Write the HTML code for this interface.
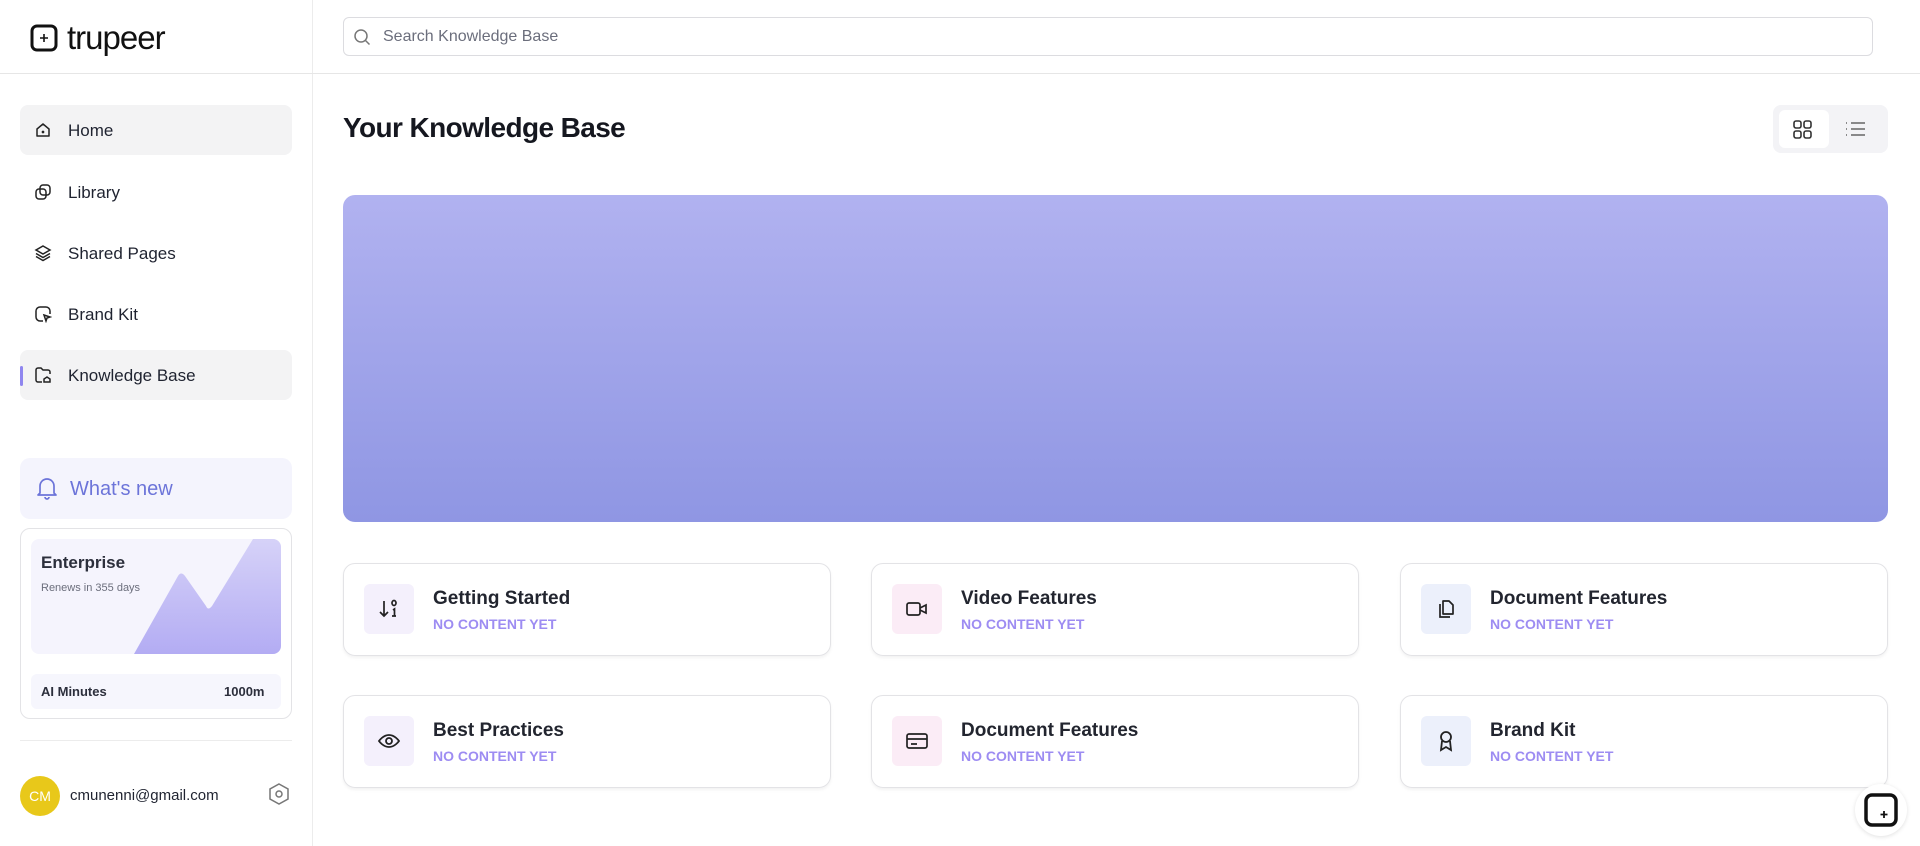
<!DOCTYPE html>
<html><head><meta charset="utf-8"><style>
*{box-sizing:border-box;margin:0;padding:0}
body{width:1920px;height:846px;overflow:hidden;background:#fff;font-family:"Liberation Sans",sans-serif;color:#1f2330;position:relative}
.abs{position:absolute}
.sb{left:0;top:0;width:313px;height:846px;border-right:1px solid #ececec}
.nav{position:absolute;left:20px;width:272px;height:50px;border-radius:8px;display:flex;align-items:center;font-size:17px;color:#1f2330}
.nav svg{position:absolute;left:14px}
.nav span{position:absolute;left:48px;top:16px}
.card{position:absolute;width:488px;height:93px;border:1px solid #e3e3e6;border-radius:12px;box-shadow:0 2px 3px rgba(0,0,0,.05)}
.ib{position:absolute;left:20px;top:20px;width:50px;height:50px;border-radius:6px;display:flex;align-items:center;justify-content:center}
.ct{position:absolute;left:89px;top:24px;font-size:19px;font-weight:bold;color:#22252f}
.cs{position:absolute;left:89px;top:52px;font-size:14px;font-weight:bold;color:#9d8cf2}
</style></head><body>
<div class="abs sb"></div>
<div class="abs" style="left:0;top:73px;width:1920px;height:1px;background:#e6e6e6"></div>
<svg class="abs" style="left:30px;top:24px" width="28" height="28" viewBox="0 0 28 28"><rect x="2" y="2" width="24" height="24" rx="5" fill="none" stroke="#111" stroke-width="3"/><path d="M14 10v8M10 14h8" stroke="#111" stroke-width="1.6"/></svg>
<div class="abs" style="left:67px;top:21px;font-size:33px;line-height:33px;font-weight:500;color:#111;letter-spacing:-1px">trupeer</div>

<div class="nav" style="top:105px;background:#f3f3f4"><svg width="18" height="18" viewBox="0 0 18 18" fill="none" stroke="#222" stroke-width="1.5"><path d="M3 8l6-5 6 5v7H3z" stroke-linejoin="round"/><circle cx="9" cy="11" r=".6" fill="#222"/></svg><span>Home</span></div>
<div class="nav" style="top:167px"><svg width="18" height="18" viewBox="0 0 18 18" fill="none" stroke="#222" stroke-width="1.5"><rect x="6" y="2" width="10" height="10" rx="3"/><rect x="2" y="6" width="10" height="10" rx="3"/></svg><span>Library</span></div>
<div class="nav" style="top:228px"><svg width="18" height="18" viewBox="0 0 18 18" fill="none" stroke="#222" stroke-width="1.5"><path d="M9 2l7 4-7 4-7-4z"/><path d="M2 9.5l7 4 7-4M2 12.5l7 4 7-4"/></svg><span>Shared Pages</span></div>
<div class="nav" style="top:289px"><svg width="18" height="18" viewBox="0 0 18 18" fill="none" stroke="#222" stroke-width="1.5"><path d="M9 16H6a4 4 0 0 1-4-4V6a4 4 0 0 1 4-4h6a4 4 0 0 1 4 4v3"/><path d="M10 10l6 2-3 1-1 3z"/></svg><span>Brand Kit</span></div>
<div class="nav" style="top:350px;background:#f3f3f4"><svg width="18" height="18" viewBox="0 0 18 18" fill="none" stroke="#222" stroke-width="1.5"><path d="M8 16H4a2 2 0 0 1-2-2V4a2 2 0 0 1 2-2h3l2 2h5a2 2 0 0 1 2 2v2"/><path d="M10 16h6v-3l-3-2-3 2z"/></svg><span>Knowledge Base</span></div>
<div class="abs" style="left:20px;top:366px;width:3px;height:20px;background:#8f86ef;border-radius:2px"></div>

<div class="abs" style="left:20px;top:458px;width:272px;height:61px;background:#f4f4fd;border-radius:10px"></div>
<svg class="abs" style="left:36px;top:476px" width="22" height="24" viewBox="0 0 22 24" fill="none" stroke="#6c74d9" stroke-width="1.7"><path d="M4 17V10a7 7 0 0 1 14 0v7l2 2H2z" stroke-linejoin="round"/><path d="M9 21a2 2 0 0 0 4 0"/></svg>
<div class="abs" style="left:70px;top:478px;font-size:20px;color:#6c74d9">What's new</div>

<div class="abs" style="left:20px;top:528px;width:272px;height:191px;border:1px solid #e3e3e6;border-radius:10px"></div>
<div class="abs" style="left:31px;top:539px;width:250px;height:115px;background:#f5f4fd;border-radius:8px;overflow:hidden">
<svg width="250" height="115" style="position:absolute;left:0;top:0"><defs><linearGradient id="g" x1="0" y1="0" x2="0" y2="1"><stop offset="0" stop-color="#d6d2f8"/><stop offset="1" stop-color="#b3acf3"/></linearGradient></defs><path d="M103 115L147 37Q150 32 154 37L175 67Q177 72 181 67L222 0H250V115Z" fill="url(#g)"/></svg>
</div>
<div class="abs" style="left:41px;top:553px;font-size:17px;font-weight:bold;color:#2c2f3c">Enterprise</div>
<div class="abs" style="left:41px;top:582px;font-size:11px;color:#6b6e7c">Renews in 355 days</div>
<div class="abs" style="left:31px;top:674px;width:250px;height:35px;background:#f6f6fd;border-radius:6px"></div>
<div class="abs" style="left:41px;top:684px;font-size:13px;font-weight:bold;color:#2c2f3c">AI Minutes</div>
<div class="abs" style="left:224px;top:684px;font-size:13px;font-weight:bold;color:#2c2f3c">1000m</div>
<div class="abs" style="left:20px;top:740px;width:272px;height:1px;background:#ececec"></div>
<div class="abs" style="left:20px;top:776px;width:40px;height:40px;border-radius:50%;background:#e8c81a;color:#fff;font-size:14px;display:flex;align-items:center;justify-content:center">CM</div>
<div class="abs" style="left:70px;top:787px;font-size:15px;color:#1f2330">cmunenni@gmail.com</div>
<svg class="abs" style="left:267px;top:782px" width="24" height="24" viewBox="0 0 24 24" fill="none" stroke="#777" stroke-width="1.5"><path d="M12 2l9 5v10l-9 5-9-5V7z"/><circle cx="12" cy="12" r="3"/></svg>

<div class="abs" style="left:343px;top:17px;width:1530px;height:39px;border:1px solid #dcdce0;border-radius:6px"></div>
<svg class="abs" style="left:353px;top:28px" width="18" height="18" viewBox="0 0 18 18" fill="none" stroke="#777" stroke-width="1.5"><circle cx="8" cy="8" r="6"/><path d="M12.5 12.5l4 4"/></svg>
<div class="abs" style="left:383px;top:28px;font-size:16px;color:#6b6e7c">Search Knowledge Base</div>

<div class="abs" style="left:343px;top:112px;font-size:28px;font-weight:bold;color:#15171f;letter-spacing:-.6px">Your Knowledge Base</div>
<div class="abs" style="left:1773px;top:105px;width:115px;height:48px;background:#f3f3f6;border-radius:8px"></div>
<div class="abs" style="left:1779px;top:110px;width:50px;height:38px;background:#fff;border-radius:6px"></div>
<svg class="abs" style="left:1793px;top:120px" width="19" height="19" viewBox="0 0 19 19" fill="none" stroke="#333" stroke-width="1.6"><rect x="1" y="1" width="7" height="7" rx="2"/><rect x="11" y="1" width="7" height="7" rx="2"/><rect x="1" y="11" width="7" height="7" rx="2"/><rect x="11" y="11" width="7" height="7" rx="2"/></svg>
<svg class="abs" style="left:1845px;top:121px" width="21" height="16" viewBox="0 0 21 16" fill="none" stroke="#666" stroke-width="1.5"><path d="M1 2h1M1 8h1M1 14h1M6 2h14M6 8h14M6 14h14"/></svg>

<div class="abs" style="left:343px;top:195px;width:1545px;height:327px;border-radius:12px;background:linear-gradient(#b1b2f0,#8f96e3)"></div>

<div class="card" style="left:343px;top:563px"><div class="ib" style="background:#f4f0fc"><svg width="22" height="22" viewBox="0 0 22 22" fill="none" stroke="#222" stroke-width="1.7"><path d="M6 3v15M2 14l4 4 4-4"/><ellipse cx="16" cy="5" rx="2" ry="2.5"/><path d="M15 12l1.5-1v7M14 18h4"/></svg></div><div class="ct">Getting Started</div><div class="cs">NO CONTENT YET</div></div>
<div class="card" style="left:871px;top:563px"><div class="ib" style="background:#fbecf6"><svg width="24" height="20" viewBox="0 0 24 20" fill="none" stroke="#222" stroke-width="1.7"><rect x="2" y="4" width="13" height="12" rx="2"/><path d="M15 9l6-3v8l-6-3"/></svg></div><div class="ct">Video Features</div><div class="cs">NO CONTENT YET</div></div>
<div class="card" style="left:1400px;top:563px"><div class="ib" style="background:#ecf0fb"><svg width="22" height="22" viewBox="0 0 22 22" fill="none" stroke="#222" stroke-width="1.7"><path d="M8 3h6l4 4v9H8z" stroke-linejoin="round"/><path d="M5 6v13h10"/></svg></div><div class="ct">Document Features</div><div class="cs">NO CONTENT YET</div></div>

<div class="card" style="left:343px;top:695px"><div class="ib" style="background:#f4f0fc"><svg width="24" height="20" viewBox="0 0 24 20" fill="none" stroke="#222" stroke-width="1.8"><path d="M2 10s4-6 10-6 10 6 10 6-4 6-10 6-10-6-10-6z"/><circle cx="12" cy="10" r="3"/></svg></div><div class="ct">Best Practices</div><div class="cs">NO CONTENT YET</div></div>
<div class="card" style="left:871px;top:695px"><div class="ib" style="background:#fbecf6"><svg width="24" height="20" viewBox="0 0 24 20" fill="none" stroke="#222" stroke-width="1.7"><rect x="2" y="3" width="20" height="14" rx="2"/><path d="M2 8h20M6 13h6"/></svg></div><div class="ct">Document Features</div><div class="cs">NO CONTENT YET</div></div>
<div class="card" style="left:1400px;top:695px"><div class="ib" style="background:#ecf0fb"><svg width="20" height="24" viewBox="0 0 20 24" fill="none" stroke="#222" stroke-width="1.8"><circle cx="10" cy="8" r="5"/><path d="M6 12l-1 9 5-3 5 3-1-9"/></svg></div><div class="ct">Brand Kit</div><div class="cs">NO CONTENT YET</div></div>

<div class="abs" style="left:1855px;top:784px;width:52px;height:52px;border-radius:50%;background:#fff;box-shadow:0 1px 4px rgba(0,0,0,.12)"></div>
<svg class="abs" style="left:1863px;top:792px" width="36" height="36" viewBox="0 0 36 36"><rect x="3" y="3" width="30" height="30" rx="6" fill="none" stroke="#111" stroke-width="3.5"/><path d="M21 19v7M17.5 22.5h7" stroke="#111" stroke-width="1.8"/></svg>
</body></html>
